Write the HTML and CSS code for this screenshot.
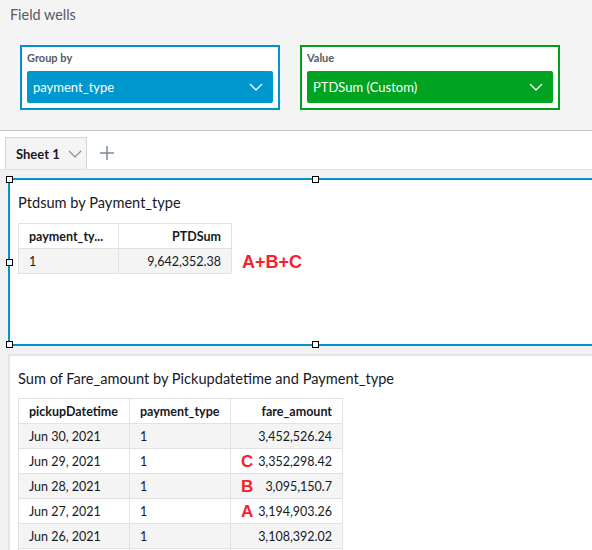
FILE: index.html
```html
<!DOCTYPE html>
<html>
<head>
<meta charset="utf-8">
<link rel="stylesheet" href="styles.css">
</head>
<body>
<div class="wells">
  <div class="wells-title">Field wells</div>
  <div class="well-row">
    <div class="well well-blue">
      <div class="well-label">Group by</div>
      <div class="dd dd-blue"><span>payment_type</span>
        <svg class="chev" width="14" height="8" viewBox="0 0 14 8"><path d="M1 1 L7 7 L13 1" fill="none" stroke="#fff" stroke-width="1.3"/></svg>
      </div>
    </div>
    <div class="well well-green">
      <div class="well-label">Value</div>
      <div class="dd dd-green"><span>PTDSum (Custom)</span>
        <svg class="chev" width="14" height="8" viewBox="0 0 14 8"><path d="M1 1 L7 7 L13 1" fill="none" stroke="#fff" stroke-width="1.3"/></svg>
      </div>
    </div>
  </div>
</div>
<div class="tabbar">
  <div class="tab"><span>Sheet 1</span>
    <svg width="14" height="8" viewBox="0 0 14 8"><path d="M1 1 L7 7 L13 1" fill="none" stroke="#7d8998" stroke-width="1.1"/></svg>
  </div>
  <svg class="plus" width="14" height="14" viewBox="0 0 14 14"><path d="M7 0 V14 M0 7 H14" stroke="#7d8998" stroke-width="1.5"/></svg>
</div>
<div class="sheet">
  <div class="visual selected">
    <span class="h h-tl"></span><span class="h h-tm"></span><span class="h h-ml"></span><span class="h h-bl"></span><span class="h h-bm"></span>
    <div class="v-title">Ptdsum by Payment_type</div>
    <div class="v-body">
      <table class="grid g1">
        <tr class="hd"><th class="c1">payment_ty...</th><th class="num c2">PTDSum</th></tr>
        <tr class="odd"><td>1</td><td class="num">9,642,352.38</td></tr>
      </table>
      <div class="note note-abc">A+B+C</div>
    </div>
  </div>
  <div class="visual plain">
    <div class="v-title">Sum of Fare_amount by Pickupdatetime and Payment_type</div>
    <table class="grid g2">
      <tr class="hd"><th class="d1">pickupDatetime</th><th class="d2">payment_type</th><th class="num d3">fare_amount</th></tr>
      <tr class="odd"><td>Jun 30, 2021</td><td>1</td><td class="num">3,452,526.24</td></tr>
      <tr><td>Jun 29, 2021</td><td>1</td><td class="num"><div class="split"><span class="note mark">C</span><span>3,352,298.42</span></div></td></tr>
      <tr class="odd"><td>Jun 28, 2021</td><td>1</td><td class="num"><div class="split"><span class="note mark">B</span><span>3,095,150.7</span></div></td></tr>
      <tr><td>Jun 27, 2021</td><td>1</td><td class="num"><div class="split"><span class="note mark">A</span><span>3,194,903.26</span></div></td></tr>
      <tr class="odd"><td>Jun 26, 2021</td><td>1</td><td class="num">3,108,392.02</td></tr>
      <tr class="empty"><td></td><td></td><td></td></tr>
    </table>
  </div>
</div>
</body>
</html>
```
FILE: styles.css
```css
html, body {
  margin: 0;
  padding: 0;
}
body {
  width: 592px;
  height: 550px;
  overflow: hidden;
  font-family: Lato, "Open Sans", sans-serif;
  color: #16191f;
  background: #f2f2f2;
}
.wells {
  background: #f4f4f4;
  height: 130px;
  border-bottom: 1px solid #c8c8c8;
}
.wells-title {
  padding: 6px 0 0 10px;
  font-size: 14.4px;
  line-height: 18px;
  color: #545b64;
}
.well-row {
  display: flex;
  gap: 20px;
  padding: 21px 0 0 20px;
}
.well {
  width: 260px;
  height: 65px;
  box-sizing: border-box;
  background: #fff;
  border: 2px solid;
  padding: 4px 5px 5px 5px;
}
.well-blue { border-color: #0093cc; }
.well-green { border-color: #00a01e; }
.well-label {
  font-size: 11px;
  font-weight: bold;
  color: #545b64;
  line-height: 14px;
  height: 20px;
}
.dd {
  height: 32px;
  border-radius: 2px;
  display: flex;
  align-items: center;
  justify-content: space-between;
  padding: 0 10px 0 6px;
  color: #fff;
  font-size: 13px;
}
.dd-blue { background: #0097cf; }
.dd-green { background: #00a420; }
.tabbar {
  background: #fff;
  height: 38px;
  border-bottom: 1px solid #e2e2e2;
  display: flex;
  align-items: flex-end;
  padding-left: 5px;
  gap: 13px;
}
.tab {
  width: 82px;
  height: 32px;
  box-sizing: border-box;
  background: #f4f4f4;
  border: 1px solid #d5d5d5;
  border-bottom: none;
  display: flex;
  align-items: center;
  gap: 8px;
  padding-left: 10px;
  font-size: 13px;
  font-weight: bold;
  color: #16191f;
}
.plus { margin-bottom: 9px; }
.sheet {
  padding: 8px 0 0 8px;
  display: flex;
  flex-direction: column;
  gap: 8px;
}
.visual {
  background: #fff;
  position: relative;
  width: 600px;
  box-sizing: border-box;
}
.selected {
  height: 168px;
  border: 2px solid #0093cc;
}
.plain {
  border: 2px solid #e6e6e6;
  height: 220px;
}
.h {
  position: absolute;
  width: 5px;
  height: 5px;
  background: #fff;
  border: 1px solid #000;
}
.h-tl { left: -4px; top: -4px; }
.h-tm { left: 302px; top: -4px; }
.h-ml { left: -4px; top: 79px; }
.h-bl { left: -4px; bottom: -4px; }
.h-bm { left: 302px; bottom: -4px; }
.v-title {
  font-size: 14.6px;
  line-height: 18px;
  padding: 14px 0 0 8px;
  color: #16191f;
}
.v-body {
  display: flex;
  align-items: flex-end;
  gap: 10px;
}
.grid {
  border-collapse: collapse;
  margin: 11px 0 0 8px;
  font-size: 12.5px;
  color: #16191f;
}
.g2 { margin-top: 10px; }
.grid th, .grid td {
  border: 1px solid #e1e1e1;
  height: 24px;
  padding: 0 10px;
  text-align: left;
  white-space: nowrap;
}
.grid th { font-weight: bold; }
.grid .num { text-align: right; }
.grid tr.odd td { background: #f4f4f4; }
.c1 { width: 79px; }
.c2 { width: 92px; }
.d1 { width: 90px; }
.d2 { width: 80px; }
.d3 { width: 91px; }
.split {
  display: flex;
  justify-content: space-between;
  align-items: center;
}
.note {
  font-family: "Liberation Sans", Arial, sans-serif;
  font-weight: bold;
  color: #f5222d;
}
.note-abc {
  font-size: 18px;
  line-height: 24px;
}
.mark {
  font-size: 17px;
  line-height: 20px;
  position: relative;
  top: 1px;
}
```
